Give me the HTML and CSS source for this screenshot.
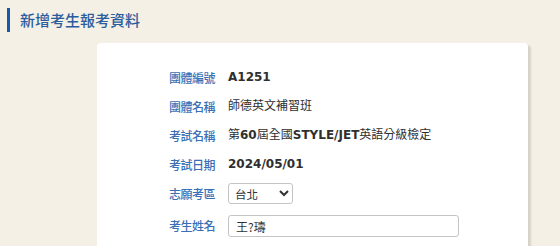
FILE: index.html
```html
<!DOCTYPE html>
<html lang="zh-TW">
<head>
    <meta charset="UTF-8">
    <meta name="viewport" content="width=device-width, initial-scale=1.0">
    <title>新增考生報考資料</title>
    <link rel="stylesheet" href="styles.css">
</head>
<body>
    <h1 class="page-title">新增考生報考資料</h1>

    <div class="card">
        <div class="form-grid">
            <div class="label">團體編號</div>
            <div class="value bold">A1251</div>

            <div class="label">團體名稱</div>
            <div class="value">師德英文補習班</div>

            <div class="label">考試名稱</div>
            <div class="value">第<b>60</b>屆全國<b>STYLE/JET</b>英語分級檢定</div>

            <div class="label">考試日期</div>
            <div class="value bold">2024/05/01</div>

            <div class="label">志願考區</div>
            <div class="value">
                <select class="select">
                    <option>台北</option>
                    <option>台中</option>
                    <option>高雄</option>
                </select>
            </div>

            <div class="label label-input">考生姓名</div>
            <div class="value value-input">
                <input type="text" class="text-input" value="王?璹">
            </div>
        </div>
    </div>
</body>
</html>
```

FILE: styles.css
```css
body {
    margin: 0;
    background-color: #f4f0e5;
    font-family: "DejaVu Sans", "Noto Sans CJK TC", sans-serif;
    font-size: 12px;
    color: #333;
}
.page-title {
    margin: 8px 0 0 7px;
    padding-left: 10px;
    border-left: 3px solid #1d57a8;
    height: 24px;
    line-height: 24px;
    font-size: 15px;
    font-weight: 500;
    color: #2b5d9e;
    font-family: "Noto Sans CJK TC", sans-serif;
}
.card {
    margin: 11px 32px 0 97px;
    height: 220px;
    background-color: #fff;
    border-radius: 4px;
    box-shadow: 3px 2px 2px rgba(0, 0, 0, 0.12);
}
.form-grid {
    display: grid;
    grid-template-columns: 118px 1fr;
    grid-auto-rows: 21px;
    column-gap: 13px;
    row-gap: 8px;
    padding-top: 24px;
}
.label {
    text-align: right;
    line-height: 21px;
    color: #3a6fb5;
    font-family: "Noto Sans CJK TC", sans-serif;
    font-size: 12px;
    font-weight: 500;
    letter-spacing: -0.5px;
}
.value {
    line-height: 21px;
    font-family: "DejaVu Sans", "Noto Sans CJK TC", sans-serif;
    color: #2f2f2f;
}
.value b, .bold {
    font-weight: bold;
}
.label-input, .value-input {
    margin-top: 3px;
    height: 22px;
}
.select {
    width: 65px;
    height: 21px;
    border: 1px solid #c4c4c4;
    border-radius: 3px;
    background-color: #fff;
    font-size: 11.5px;
    font-family: "Noto Sans CJK TC", sans-serif;
    padding: 0 2px;
    color: #333;
}
.text-input {
    box-sizing: border-box;
    width: 231px;
    height: 22px;
    border: 1px solid #c4c4c4;
    border-radius: 3px;
    padding: 0 7px;
    font-size: 12px;
    font-family: "Noto Sans CJK TC", sans-serif;
    color: #333;
}
```
